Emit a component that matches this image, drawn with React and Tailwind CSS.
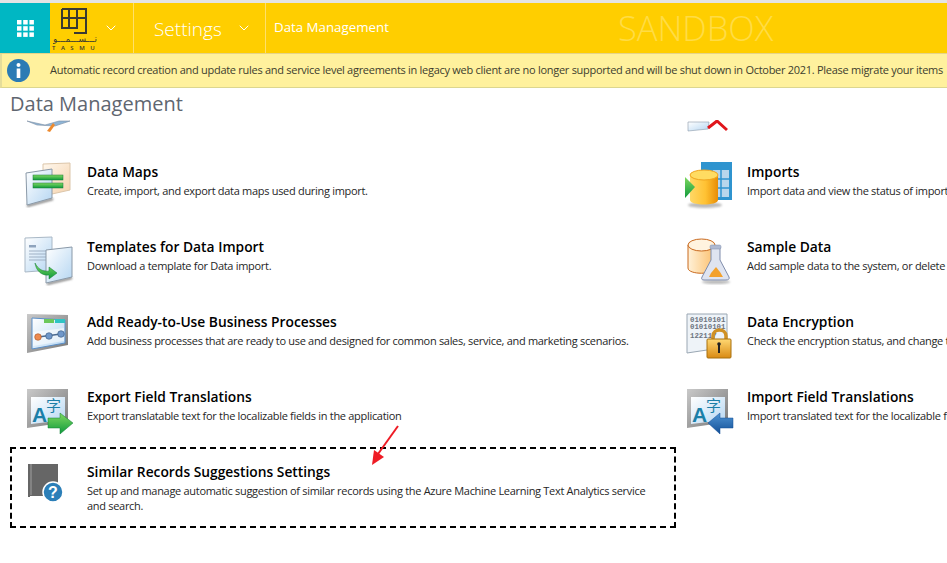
import { ChevronDown } from "lucide-react";

const FONT = "font-['Open_Sans','Noto_Sans',sans-serif]";

function Gradients() {
  return (
    <svg width="0" height="0" className="absolute">
      <defs>
        <linearGradient id="page" x1="0" y1="0" x2="1" y2="1">
          <stop offset="0" stopColor="#ffffff" />
          <stop offset="1" stopColor="#b5d6f2" />
        </linearGradient>
        <linearGradient id="peach" x1="0" y1="0" x2="1" y2="1">
          <stop offset="0" stopColor="#fff8ee" />
          <stop offset="1" stopColor="#f5d3ae" />
        </linearGradient>
        <linearGradient id="green" x1="0" y1="0" x2="0" y2="1">
          <stop offset="0" stopColor="#7fd860" />
          <stop offset="1" stopColor="#0f9a3c" />
        </linearGradient>
        <linearGradient id="blueArrow" x1="0" y1="0" x2="0" y2="1">
          <stop offset="0" stopColor="#4f94d4" />
          <stop offset="1" stopColor="#124f96" />
        </linearGradient>
        <linearGradient id="drum" x1="0" y1="0" x2="1" y2="0">
          <stop offset="0" stopColor="#ffd866" />
          <stop offset="0.55" stopColor="#ffc233" />
          <stop offset="1" stopColor="#e88d05" />
        </linearGradient>
        <linearGradient id="paleDrum" x1="0" y1="0" x2="1" y2="0">
          <stop offset="0" stopColor="#fff1d8" />
          <stop offset="1" stopColor="#fbbf6c" />
        </linearGradient>
        <linearGradient id="gold" x1="0" y1="0" x2="0" y2="1">
          <stop offset="0" stopColor="#ffd873" />
          <stop offset="1" stopColor="#d98a13" />
        </linearGradient>
        <linearGradient id="frame" x1="0" y1="0" x2="1" y2="1">
          <stop offset="0" stopColor="#c9c9c9" />
          <stop offset="1" stopColor="#767676" />
        </linearGradient>
        <filter id="soft" x="-20%" y="-20%" width="140%" height="140%">
          <feGaussianBlur stdDeviation="1.2" />
        </filter>
      </defs>
    </svg>
  );
}

function DataMapsIcon() {
  return (
    <svg width="52" height="50" viewBox="0 0 52 50">
      <path d="M21 3 L48 2 L48 29 L30 33 L21 33Z" fill="url(#peach)" stroke="#dcc6aa" />
      <path d="M5 45 L31 38" stroke="#777" strokeWidth="2" filter="url(#soft)" />
      <path d="M4 12 L30 8 L30 37 L5 44Z" fill="url(#page)" stroke="#8a99a8" />
      <rect x="11" y="14" width="30" height="5" fill="url(#green)" stroke="#157a3a" strokeWidth=".5" />
      <rect x="11" y="22" width="30" height="5" fill="url(#green)" stroke="#157a3a" strokeWidth=".5" />
    </svg>
  );
}

function TemplatesIcon() {
  return (
    <svg width="52" height="50" viewBox="0 0 52 50">
      <path d="M3 2 L30 1 L30 34 L3 36Z" fill="url(#page)" stroke="#a9b8c6" />
      <rect x="7" y="9" width="7" height="2.5" fill="#8fa4bd" />
      <path d="M7 15H24M7 18H24M7 21H24M7 24H24" stroke="#9fb0c4" strokeWidth="1" />
      <path d="M25 48 L50 42" stroke="#777" strokeWidth="2" filter="url(#soft)" />
      <path d="M24 14 L50 11 L50 41 L24 47Z" fill="url(#page)" stroke="#8a99a8" />
      <path d="M13 27 C16 33 21 36 27 35 L27 31 L35 37 L27 43 L27 39 C20 40 14 35 13 27Z" fill="url(#green)" stroke="#0e7d35" strokeWidth=".5" />
    </svg>
  );
}

function ProcessIcon() {
  return (
    <svg width="52" height="50" viewBox="0 0 52 50">
      <path d="M5 3 L46 4 L46 34 L5 42Z" fill="url(#frame)" />
      <path d="M10 7 L43 9 L43 32 L10 38Z" fill="url(#page)" stroke="#5a8fc9" />
      <path d="M11 21 L42 17 L42 30 L11 35Z" fill="#ffffff" opacity=".55" />
      <rect x="22" y="8" width="10" height="4" fill="#6cc85a" />
      <rect x="33" y="8" width="10" height="4" fill="#2fc4c4" />
      <path d="M16 26L39 23" stroke="#49698f" strokeWidth="1.5" />
      <circle cx="16" cy="26" r="3.3" fill="#ee8a4f" stroke="#a65426" strokeWidth=".6" />
      <circle cx="27" cy="25" r="3.3" fill="#6f97c9" stroke="#35557c" strokeWidth=".6" />
      <circle cx="39" cy="23" r="3.3" fill="#6f97c9" stroke="#35557c" strokeWidth=".6" />
    </svg>
  );
}

function TranslateIcon({ arrow }) {
  return (
    <svg width="52" height="50" viewBox="0 0 52 50">
      <path d="M5 3 L46 3 L46 36 L5 42Z" fill="url(#frame)" />
      <path d="M9 11 L43 11 L43 34 L9 38Z" fill="url(#page)" />
      <text x="10" y="36" fontFamily="'Liberation Sans',sans-serif" fontWeight="700" fontSize="21" fill="#1b7fa8">A</text>
      <text x="24" y="25" fontFamily="'Noto Sans CJK SC',sans-serif" fontSize="15" fill="#1b7fa8">字</text>
      {arrow === "right" ? (
        <path d="M26 32 H38 V27 L51 37 L38 48 V42 H26Z" fill="url(#green)" stroke="#0e7d35" strokeWidth=".5" />
      ) : (
        <path d="M51 32 H38 V27 L26 37 L38 48 V42 H51Z" fill="url(#blueArrow)" stroke="#124f96" strokeWidth=".5" />
      )}
    </svg>
  );
}

function ImportsIcon() {
  return (
    <svg width="52" height="50" viewBox="0 0 52 50">
      <rect x="19" y="1" width="31" height="38" fill="#2f94cf" />
      <path d="M22 9H47V36H22Z" fill="#b8d6ec" />
      <path d="M30 2V38M39 2V38M20 18H49M20 27H49" stroke="#2f94cf" strokeWidth="1.5" />
      <ellipse cx="23" cy="44" rx="17" ry="3" fill="#777" opacity=".5" filter="url(#soft)" />
      <path d="M8 14 V39 C8 45 36 45 36 39 V14Z" fill="url(#drum)" />
      <ellipse cx="22" cy="14" rx="14" ry="5" fill="#ffdc62" stroke="#f0a41e" />
      <path d="M3 16 L13 26 L3 37Z" fill="url(#green)" />
    </svg>
  );
}

function SampleIcon() {
  return (
    <svg width="52" height="50" viewBox="0 0 52 50">
      <path d="M6 9 V32 C6 39 33 39 33 32 V9Z" fill="url(#paleDrum)" stroke="#c9691d" />
      <ellipse cx="19.5" cy="9" rx="13.5" ry="6" fill="#fff3df" stroke="#c9691d" />
      <ellipse cx="34" cy="46" rx="14" ry="2" fill="#777" opacity=".5" filter="url(#soft)" />
      <path d="M29 12 H38 V24 L47 41 C48 43 46 44 44 44 H22 C20 44 19 43 20 41 L29 24Z" fill="#dfe4f0" stroke="#7f8cab" />
      <rect x="28" y="9" width="11" height="4" rx="1.5" fill="#aeb9d1" stroke="#7f8cab" strokeWidth=".5" />
      <path d="M34 31 L38 36 L41 41 H27 L29 37Z" fill="#f3a12c" />
    </svg>
  );
}

function EncryptionIcon() {
  return (
    <svg width="52" height="50" viewBox="0 0 52 50">
      <path d="M5 3 L45 3 L45 36 L5 42Z" fill="#eef3f8" stroke="#9aa7b3" />
      <text x="8" y="11" fontFamily="'Liberation Mono',monospace" fontSize="7.4" fontWeight="700" fill="#6d7480">01010101</text>
      <text x="8" y="18" fontFamily="'Liberation Mono',monospace" fontSize="7.4" fontWeight="700" fill="#6d7480">01010101</text>
      <text x="8" y="27" fontFamily="'Liberation Mono',monospace" fontSize="7.4" fontWeight="700" fill="#6d7480">122117</text>
      <path d="M31 29 V25 C31 17 44 17 44 25 V29" fill="none" stroke="#d09124" strokeWidth="3.5" />
      <rect x="25" y="28" width="24" height="19" rx="1" fill="url(#gold)" stroke="#a8700f" />
      <path d="M37 33 V42" stroke="#222" strokeWidth="2" />
      <circle cx="37" cy="33" r="1.8" fill="#222" />
    </svg>
  );
}

function HelpBookIcon() {
  return (
    <svg width="50" height="50" viewBox="0 0 50 50">
      <rect x="1" y="4" width="30" height="33" fill="#666666" />
      <path d="M4 4V35" stroke="#a0a0a0" strokeWidth="1" />
      <path d="M3 36.5H31" stroke="#fff" strokeWidth="1" />
      <circle cx="26" cy="32" r="10" fill="#2c7fb8" stroke="#fff" strokeWidth="1.5" />
      <text x="26" y="38" textAnchor="middle" fontFamily="'Liberation Sans',sans-serif" fontWeight="700" fontSize="16" fill="#fff">?</text>
    </svg>
  );
}

const rows = [
  [
    { icon: <DataMapsIcon />, title: "Data Maps", desc: "Create, import, and export data maps used during import." },
    { icon: <ImportsIcon />, title: "Imports", desc: "Import data and view the status of imports in the application." },
  ],
  [
    { icon: <TemplatesIcon />, title: "Templates for Data Import", desc: "Download a template for Data import." },
    { icon: <SampleIcon />, title: "Sample Data", desc: "Add sample data to the system, or delete it when you are done." },
  ],
  [
    { icon: <ProcessIcon />, title: "Add Ready-to-Use Business Processes", desc: "Add business processes that are ready to use and designed for common sales, service, and marketing scenarios." },
    { icon: <EncryptionIcon />, title: "Data Encryption", desc: "Check the encryption status, and change the encryption key." },
  ],
  [
    { icon: <TranslateIcon arrow="right" />, title: "Export Field Translations", desc: "Export translatable text for the localizable fields in the application" },
    { icon: <TranslateIcon arrow="left" />, title: "Import Field Translations", desc: "Import translated text for the localizable fields in the application" },
  ],
];

function Item({ icon, title, desc }) {
  return (
    <div className="flex h-[75px] w-[660px] shrink-0 pl-[22px]">
      <div className="w-[65px] shrink-0 pt-[6px]">{icon}</div>
      <div className="pt-[7px]">
        <div className="text-[13.8px] leading-[20px] font-semibold whitespace-nowrap text-black">{title}</div>
        <div className="text-[11px] leading-[18px] tracking-[-0.3px] whitespace-nowrap text-[#262626]">{desc}</div>
      </div>
    </div>
  );
}

export default function App() {
  return (
    <div className={`${FONT} relative h-[563px] w-[947px] overflow-hidden bg-white`}>
      <Gradients />

      {/* Nav bar */}
      <div className="h-[3px] bg-[#e4e4e4]" />
      <div className="flex h-[51px] border-b border-[#e6d48a] bg-[#ffce00] text-white">
        <div className="flex w-[50px] items-center justify-center bg-[#00b7c3]">
          <svg width="17" height="17" viewBox="0 0 17 17" fill="#fff">
            <rect x="0" y="0" width="4.5" height="4.5" />
            <rect x="6.2" y="0" width="4.5" height="4.5" />
            <rect x="12.4" y="0" width="4.5" height="4.5" />
            <rect x="0" y="6.2" width="4.5" height="4.5" />
            <rect x="6.2" y="6.2" width="4.5" height="4.5" />
            <rect x="12.4" y="6.2" width="4.5" height="4.5" />
            <rect x="0" y="12.4" width="4.5" height="4.5" />
            <rect x="6.2" y="12.4" width="4.5" height="4.5" />
            <rect x="12.4" y="12.4" width="4.5" height="4.5" />
          </svg>
        </div>
        <div className="flex w-[84px] items-center border-r border-[#ffe06a] pl-[2px]">
          <div className="flex w-[46px] flex-col items-center pt-[3px]">
            <svg width="28" height="26" viewBox="0 0 28 26" fill="none" stroke="#3a3a32" strokeWidth="2">
              <path d="M1 1H25V26M1 1V21M8 1V21M16 1V21M1 10H25M1 20H16M13 25H25" />
            </svg>
            <div dir="rtl" className="h-[10px] w-[44px] overflow-hidden font-['DejaVu_Sans',sans-serif] text-[9px] leading-[10px] whitespace-nowrap text-[#3a3a32]">
              تـــســـمـــو
            </div>
            <div className="mt-[1px] w-[46px] text-[6px] leading-[7px] font-semibold tracking-[5.5px] whitespace-nowrap text-[#3a3a32]">TASMU</div>
          </div>
          <ChevronDown size={16} strokeWidth={1.5} className="ml-[5px]" />
        </div>
        <div className="flex w-[132px] items-center border-r border-[#ffe06a] pl-[20px]">
          <span className="text-[19px] leading-[24px] font-light pt-[2px]">Settings</span>
          <ChevronDown size={16} strokeWidth={1.5} className="ml-[14px]" />
        </div>
        <div className="flex items-center pl-[8px] text-[13.3px]">Data Management</div>
        <div className="ml-[229px] flex items-center text-[34.5px] font-light whitespace-nowrap text-[#ffdc45]">SANDBOX</div>
      </div>

      {/* Notification */}
      <div className="flex h-[34px] items-center overflow-hidden border-b border-[#dcd68f] border-l-[2px] border-l-[#e5dd9a] bg-[#fff19d] pl-[5px] whitespace-nowrap">
        <svg width="23" height="23" viewBox="0 0 23 23" className="shrink-0">
          <circle cx="11.5" cy="11.5" r="11.5" fill="#2b7bb4" />
          <circle cx="11.5" cy="6" r="2" fill="#fff" />
          <rect x="9.7" y="9.5" width="3.6" height="9.5" fill="#fff" />
        </svg>
        <span className="ml-[20px] text-[11px] tracking-[-0.28px] text-[#3d3d2e]">
          Automatic record creation and update rules and service level agreements in legacy web client are no longer supported and will be shut down in October 2021. Please migrate your items
        </span>
      </div>

      <div className="pt-[2px] pl-[10px] text-[20px] leading-[28px] text-[#5f6670]">Data Management</div>

      {/* Clipped bottom of the row scrolled out above */}
      <div className="mt-[2px] flex h-[12px] overflow-hidden">
        <div className="w-[660px] shrink-0 pl-[25px]">
          <svg width="46" height="12" viewBox="0 0 46 12">
            <path d="M2 1 L20 5 L34 1 L45 1 L30 6 L12 5Z" fill="#8fb6d8" stroke="#7d8ea3" strokeWidth=".6" />
            <path d="M22 11 L28 3 L30 5 L25 12Z" fill="#ee8a2e" />
          </svg>
        </div>
        <div className="shrink-0 pl-[27px]">
          <svg width="44" height="12" viewBox="0 0 44 12">
            <path d="M1 2 L22 2 L21 9 L1 11Z" fill="url(#page)" stroke="#8a99a8" strokeWidth=".6" />
            <path d="M21 8 L30 1 L40 10" fill="none" stroke="#e0151b" strokeWidth="3" />
          </svg>
        </div>
      </div>

      {/* Tool list */}
      <div className="mt-[23px] flex flex-col">
        {rows.map((row, i) => (
          <div key={i} className="flex">
            {row.map((item) => (
              <Item key={item.title} {...item} />
            ))}
          </div>
        ))}
      </div>

      {/* Highlighted item */}
      <div className="-mt-[8px] ml-[10px] flex h-[81px] w-[666px] border-2 border-dashed border-black pl-[15px]">
        <div className="w-[60px] shrink-0 pt-[11px]">
          <HelpBookIcon />
        </div>
        <div className="pt-[13px]">
          <div className="text-[13.8px] leading-[20px] font-semibold text-black">Similar Records Suggestions Settings</div>
          <div className="mt-[1px] w-[572px] text-[11px] leading-[15px] tracking-[-0.3px] text-[#262626]">
            Set up and manage automatic suggestion of similar records using the Azure Machine Learning Text Analytics service and search.
          </div>
        </div>
      </div>

      {/* Annotation arrow */}
      <svg width="32" height="44" viewBox="0 0 32 44" className="absolute top-[424px] left-[370px]">
        <path d="M28 2 L8 30" stroke="#ee1c25" strokeWidth="2" />
        <path d="M2 41 L4 26 L14 33Z" fill="#ee1c25" />
      </svg>
    </div>
  );
}
